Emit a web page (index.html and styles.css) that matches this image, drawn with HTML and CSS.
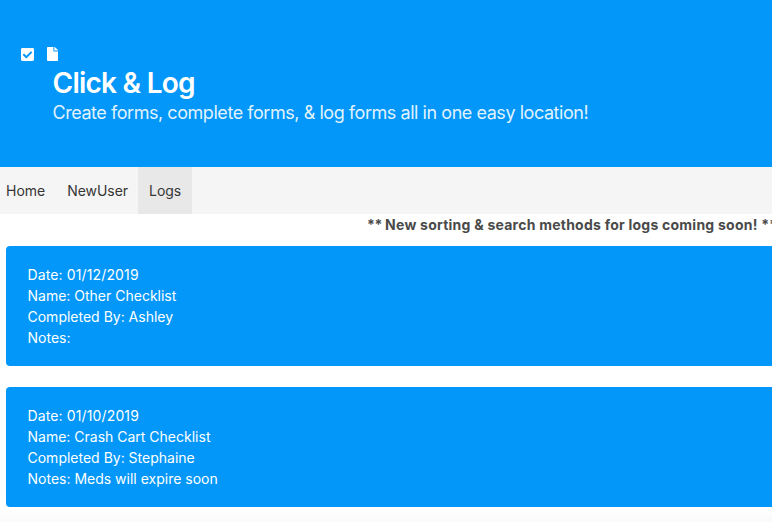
FILE: index.html
```html
<!DOCTYPE html>
<html lang="en">
<head>
<meta charset="utf-8">
<title>Click &amp; Log</title>
<link rel="stylesheet" href="styles.css">
</head>
<body>
<div class="page">
  <header class="hero">
    <div class="icons">
      <svg class="icon-check" viewBox="0 32 448 448" preserveAspectRatio="none"><path fill="currentColor" d="M400 480H48c-26.500 0-48-21.500-48-48V80c0-26.500 21.500-48 48-48h352c26.500 0 48 21.500 48 48v352c0 26.500-21.500 48-48 48zm-204.700-98.100l184-184c6.200-6.200 6.200-16.400 0-22.600l-22.600-22.600c-6.200-6.200-16.400-6.200-22.600 0L184 302.700l-70.100-70.100c-6.200-6.200-16.400-6.200-22.600 0l-22.600 22.600c-6.200 6.200-6.200 16.400 0 22.600l104 104c6.200 6.300 16.400 6.300 22.600.1z"/></svg>
      <svg class="icon-file" viewBox="0 0 384 512" preserveAspectRatio="none"><path fill="currentColor" d="M224 136V0H24C10.700 0 0 10.700 0 24v464c0 13.300 10.700 24 24 24h336c13.300 0 24-10.700 24-24V160H248c-13.200 0-24-10.800-24-24zm160-14.100v6.100H256V0h6.100c6.400 0 12.500 2.500 17 7l97.900 98c4.500 4.500 7 10.600 7 16.900z"/></svg>
    </div>
    <div class="heading">
      <h1>Click &amp; Log</h1>
      <p class="subtitle">Create forms, complete forms, &amp; log forms all in one easy location!</p>
    </div>
  </header>
  <nav class="navbar">
    <a class="home">Home</a>
    <a>NewUser</a>
    <a class="active">Logs</a>
  </nav>
  <p class="notice">** <span class="notice-text">New sorting &amp; search methods for logs coming soon! **</span></p>
  <main class="logs">
    <article class="log">
      <p class="date">Date: 01/12/2019</p>
      <p>Name: Other Checklist</p>
      <p>Completed By: Ashley</p>
      <p>Notes:</p>
    </article>
    <article class="log">
      <p class="date">Date: 01/10/2019</p>
      <p>Name: Crash Cart Checklist</p>
      <p>Completed By: Stephaine</p>
      <p>Notes: Meds will expire soon</p>
    </article>
  </main>
  <footer class="footer"></footer>
</div>
</body>
</html>
```
FILE: styles.css
```css
* { box-sizing: border-box; }
body {
  margin: 0;
  background: #fff;
  color: #4a4a4a;
  font: 14px/21px Inter, "Liberation Sans", sans-serif;
}
h1, p { margin: 0; }
.page { width: 100%; height: 522px; overflow: hidden; }
.hero {
  height: 167px;
  padding: 47px 21px 0;
  background: #0297f8;
  color: #fff;
}
.icons { display: flex; gap: 13px; height: 14px; }
.icon-check { display: block; width: 13px; height: 13px; margin-top: 1px; }
.icon-file { display: block; width: 11px; height: 14px; }
.heading { padding: 5px 0 0 31.500px; }
h1 { font-size: 28px; line-height: 34px; font-weight: 600; letter-spacing: -0.75px; }
.subtitle {
  font-size: 18px;
  line-height: 26px;
  letter-spacing: -0.45px;
  color: rgba(255, 255, 255, 0.9);
}
.navbar { display: flex; height: 47px; background: #f5f5f5; color: #363636; }
.navbar a { display: flex; align-items: center; padding: 0 11px; }
.navbar .home { padding-left: 6px; }
.navbar a:nth-child(2) { padding-right: 10px; letter-spacing: -0.05px; }
.navbar .active { width: 54px; background: #e8e8e8; letter-spacing: -0.05px; }
.notice {
  height: 32px;
  padding-left: 367px;
  font-weight: 700;
  letter-spacing: -0.3px;
  white-space: nowrap;
}
.notice-text { letter-spacing: 0.24px; }
.logs { display: flex; flex-direction: column; gap: 21px; padding-left: 6px; }
.log {
  height: 120px;
  padding: 18px 21.500px;
  border-radius: 4px 0 0 4px;
  background: #0297f8;
  color: #fff;
  letter-spacing: 0;
}
.date { letter-spacing: 0.13px; }
.footer { height: 15px; background: linear-gradient(#fff, #fafafa); }
```
